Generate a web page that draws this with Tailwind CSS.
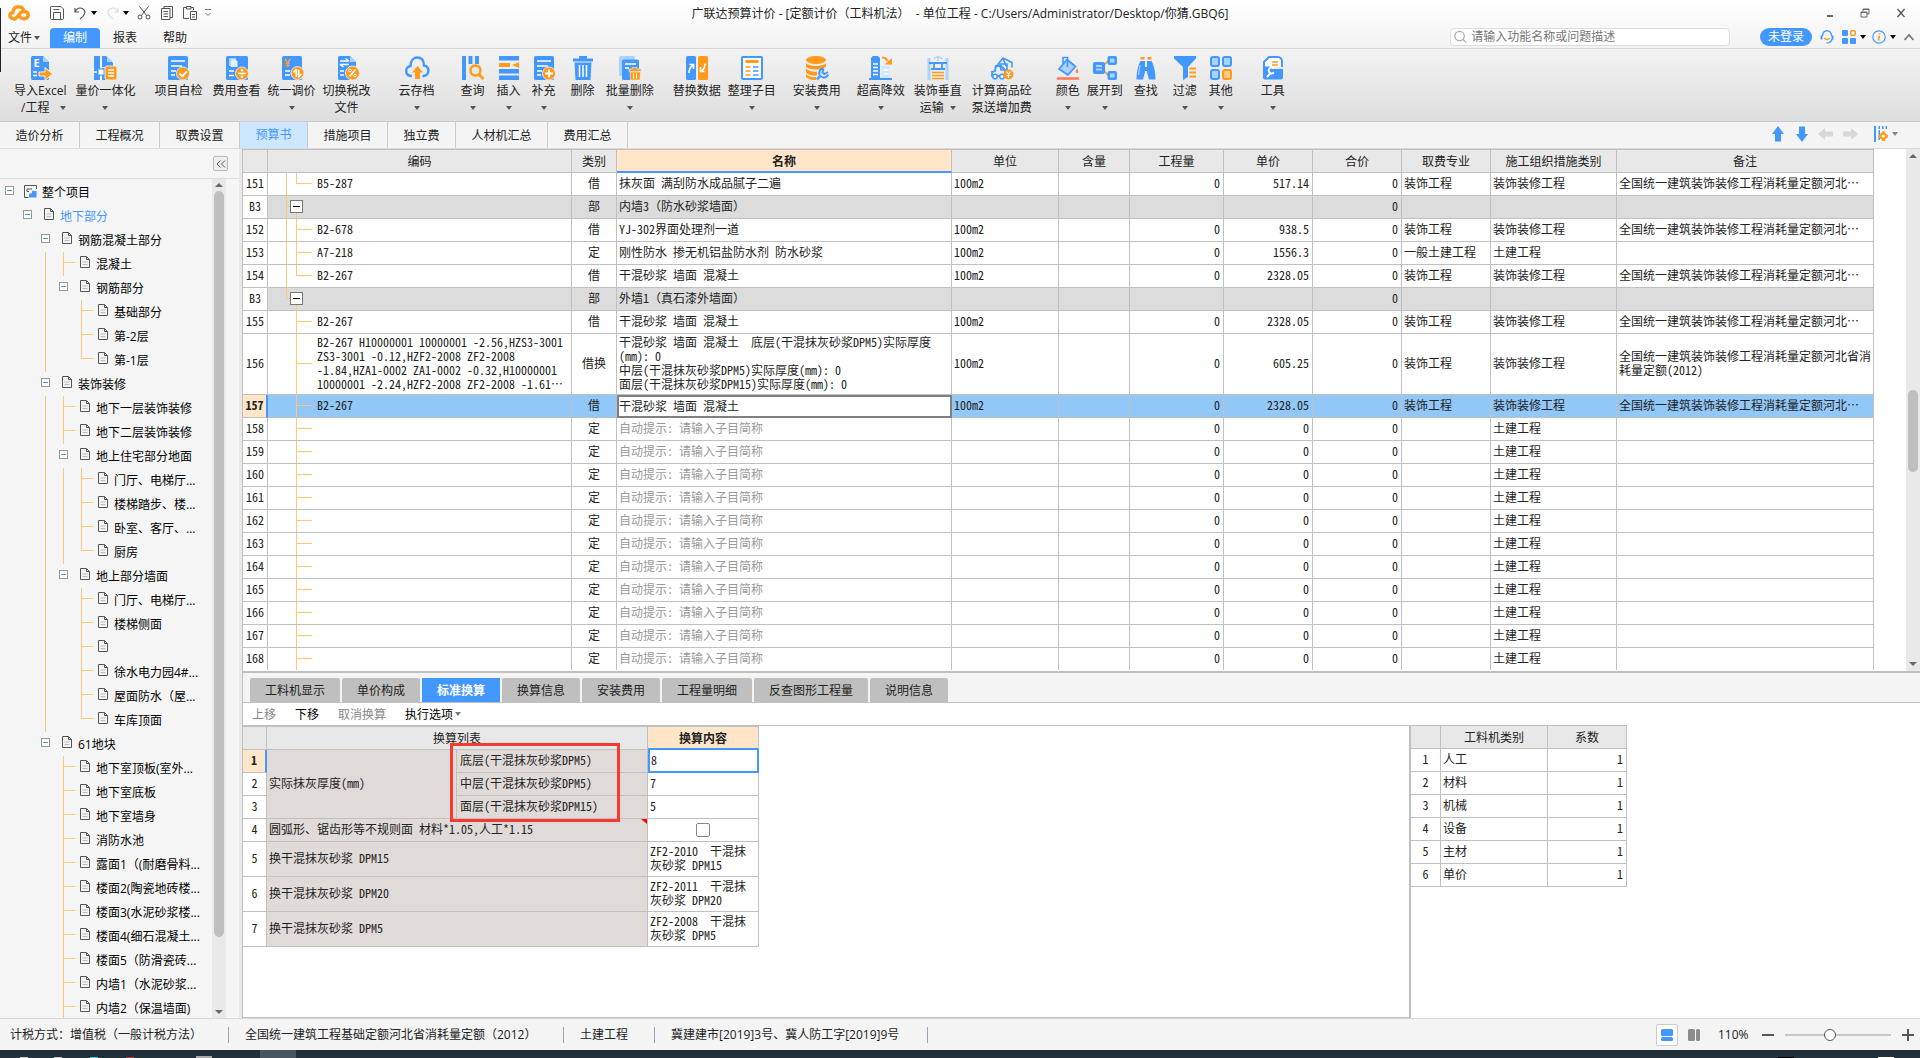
<!DOCTYPE html>
<html lang="zh-CN">
<head>
<meta charset="utf-8">
<title>广联达预算计价</title>
<script src="https://cdn.jsdelivr.net/npm/@tailwindcss/browser@4"></script>
</head>
<body class="flex h-screen flex-col overflow-hidden bg-white font-['Open_Sans','Noto_Sans_CJK_SC',sans-serif] text-xs leading-4 text-[#222]">

<header class="relative shrink-0 border-b border-[#d4d4d4] bg-linear-to-b from-white to-[#f3f3f3]">
  <span class="absolute top-2 left-0 h-16 w-px bg-[#222]"></span>
  <div class="grid h-[26px] grid-cols-[1fr_auto_1fr] items-center">
    <div class="flex items-center pl-2">
      <svg class="h-4 w-[22px]" viewBox="0 0 22 16" fill="none" stroke="#ff9a1a" stroke-width="3.4" stroke-linecap="round" stroke-linejoin="round"><path d="M4 13.5C1 12 1 8 5 7.500C5 3 8 1.700 10.500 1.700C14 1.700 15.500 4 16 6.500C20.500 6.500 21.500 11 18.500 13C16.500 14.300 13.500 14 11.500 11.500"/><path d="M6.500 14.200C8.500 13.500 9.500 12 11 9.500C12.500 7 14 6.500 16 6.500"/></svg>
      <button class="ml-5" aria-label="保存"><svg class="h-3.5 w-3.5" viewBox="0 0 14 14" fill="none" stroke="#555"><path d="M.5 1.500a1 1 0 0 1 1-1H11L13.500 3v9.500a1 1 0 0 1-1 1h-11a1 1 0 0 1-1-1zM3.500 13V6.500h7V13M3.500 3.500h6"/></svg></button>
      <button class="ml-2.5" aria-label="撤销"><svg class="h-3.5 w-3" viewBox="0 0 12 14" fill="none" stroke="#555" stroke-width="1.200"><path d="M1 2v4h4M1 6C3 2 6 1.500 8.500 2.500C12.500 5 11.500 9 6 13"/></svg></button>
      <svg class="ml-[5px] h-1 w-1.5" viewBox="0 0 6 4"><path d="M0 0h6L3 4z"/></svg>
      <button class="ml-2.5" aria-label="恢复"><svg class="h-3.5 w-3" viewBox="0 0 12 14" fill="none" stroke="#ddd" stroke-width="1.200"><path d="M11 2v4H7M11 6C9 2 6 1.500 3.500 2.500C-.5 5 .5 9 6 13"/></svg></button>
      <svg class="ml-1 h-1 w-1.5" viewBox="0 0 6 4"><path d="M0 0h6L3 4z"/></svg>
      <button class="ml-2" aria-label="剪切"><svg class="h-3.5 w-3.5" viewBox="0 0 14 14" fill="none" stroke="#555"><circle cx="3" cy="11" r="2"/><circle cx="11" cy="11" r="2"/><path d="M2.500.5L9.700 9.500M11.500.5L4.300 9.500"/></svg></button>
      <button class="ml-2.5" aria-label="复制"><svg class="h-3.5 w-3" viewBox="0 0 12 14" fill="none" stroke="#555"><path d="M3 2.500V.5h8.500v11H9M.5 2.500H9v11H.5zM2.500 5.500H7M2.500 8H7M2.500 10.500H7"/></svg></button>
      <button class="ml-2.5" aria-label="粘贴"><svg class="h-3.5 w-3.5" viewBox="0 0 14 14" fill="none" stroke="#555"><path d="M6 12.500H.5v-11h3M8 1.500h2.500V4M3.500.5H8V3H3.500zM7.500 5.500h6v8h-6zM9 8.500h3M9 11h3"/></svg></button>
      <svg class="ml-2 h-2 w-1.5" viewBox="0 0 6 8" fill="none" stroke="#777"><path d="M0 .5h6M.5 4L3 6.500L5.500 4"/></svg>
    </div>
    <h1 class="pt-px whitespace-pre">广联达预算计价 - [定额计价（工料机法）  - 单位工程 - C:/Users/Administrator/Desktop/你猜.GBQ6]</h1>
    <div class="flex items-center justify-end gap-[26px] pr-3.5 text-[#666]">
      <button aria-label="最小化"><svg class="h-2.5 w-2" viewBox="0 0 8 10"><path d="M1 7h6v2H1z" fill="#666"/></svg></button>
      <button aria-label="还原"><svg class="h-2.5 w-2.5" viewBox="0 0 10 10" fill="none" stroke="#666"><path d="M3 3V1h6v5H7M3 1.500h6M1 4h6v5H1zM1 4.500h6"/></svg></button>
      <button aria-label="关闭"><svg class="h-2.5 w-2.5" viewBox="0 0 10 10" fill="none" stroke="#555" stroke-width="1.300"><path d="M1.500 1L8.500 9M8.500 1L1.500 9"/></svg></button>
    </div>
  </div>
  <div class="flex h-[22px] items-end">
    <nav class="flex items-end">
      <button class="flex h-5 w-[50px] items-center gap-0.5 pl-2">文件<svg class="h-1 w-1.5" viewBox="0 0 6 4"><path d="M0 0h6L3 4z" fill="#555"/></svg></button>
      <button class="h-5 w-[50px] rounded-t-sm bg-[#4398ff] text-white">编制</button>
      <button class="h-5 w-[50px]">报表</button>
      <button class="h-5 w-[50px]">帮助</button>
    </nav>
    <div class="ml-auto flex items-center pr-1.5 pb-0.5">
      <label class="flex h-[18px] w-[280px] items-center gap-1 rounded-sm border border-[#ddd] bg-white pl-[3px]">
        <svg class="h-3.5 w-3.5" viewBox="0 0 14 14" fill="none" stroke="#aaa" stroke-width="1.300"><circle cx="6" cy="6" r="5"/><path d="M9.500 9.500L13 13"/></svg>
        <input type="text" class="w-full bg-transparent leading-4 outline-none placeholder:text-[#777]" placeholder="请输入功能名称或问题描述" aria-label="搜索">
      </label>
      <button class="ml-[30px] h-[18px] w-[52px] rounded-full bg-[#4398ff] text-white">未登录</button>
      <svg class="ml-2 h-3.5 w-3.5" viewBox="0 0 14 14" fill="none" stroke="#4398ff" stroke-width="1.500"><path d="M2.500 6C2.500 -1 11.500 -1 11.500 6M12 9C11.500 12 9 13 6.500 13"/><path d="M1.500 5.500v4M12.500 5.500v4" stroke-width="2"/><path d="M4.500 8C6 10 8 10 9.500 8" stroke="#ff9a1a"/></svg>
      <svg class="ml-2 h-3.5 w-3.5" viewBox="0 0 14 14" fill="#4398ff"><rect width="6" height="6" rx="1"/><rect y="8" width="6" height="6" rx="1"/><rect x="8" y="8" width="6" height="6" rx="1"/><rect x="8.700" y=".7" width="4.600" height="4.600" rx="1" fill="none" stroke="#ff9a1a" stroke-width="1.400"/></svg>
      <svg class="ml-1 h-1 w-1.5" viewBox="0 0 6 4"><path d="M0 0h6L3 4z"/></svg>
      <svg class="ml-1.5 h-3.5 w-3.5" viewBox="0 0 14 14" fill="none" stroke="#4398ff" stroke-width="1.200"><circle cx="7" cy="7" r="6.200"/><path d="M7.300 5.700L6.500 10.500M7.700 3.200l-.1 1.200" stroke="#ff9a1a" stroke-width="1.700"/></svg>
      <svg class="ml-1 h-1 w-1.5" viewBox="0 0 6 4"><path d="M0 0h6L3 4z"/></svg>
      <svg class="ml-2 h-2 w-2.5" viewBox="0 0 10 8" fill="none" stroke="#777" stroke-width="1.800"><path d="M.5 7L5 2L9.500 7"/></svg>
    </div>
  </div>
</header>

<div id="ribbon" class="flex h-[73px] shrink-0 items-start border-b border-[#ccc] bg-linear-to-b from-[#f3f3f3] to-[#dedede] pt-[7px]"></div>

<nav class="flex h-[27px] shrink-0 items-stretch border-b border-[#d9d9d9] bg-[#f4f4f4]">
  <button class="w-20 border-r border-[#ccc] pt-0.5">造价分析</button>
  <button class="w-20 border-r border-[#ccc] pt-0.5">工程概况</button>
  <button class="w-20 border-r border-[#ccc] pt-0.5">取费设置</button>
  <button class="w-[68px] border-r border-[#ccc] bg-[#cce7ff] text-[#4398ff]">预算书</button>
  <button class="w-20 border-r border-[#ccc] pt-0.5">措施项目</button>
  <button class="w-[68px] border-r border-[#ccc] pt-0.5">独立费</button>
  <button class="w-[92px] border-r border-[#ccc] pt-0.5">人材机汇总</button>
  <button class="w-20 border-r border-[#ccc] pt-0.5">费用汇总</button>
  <div class="ml-auto flex items-center pr-[22px] pb-0.5">
    <button aria-label="上移行"><svg class="h-4 w-3" viewBox="0 0 12 16"><path d="M6 0l6 8H9v7.500H3V8H0z" fill="#4398ff"/></svg></button>
    <button class="ml-3" aria-label="下移行"><svg class="h-4 w-3" viewBox="0 0 12 16"><path d="M6 16l6-8H9V.5H3V8H0z" fill="#4398ff"/></svg></button>
    <button class="ml-2.5" aria-label="后退"><svg class="h-3 w-[15px]" viewBox="0 0 15 12"><path d="M0 6l7-6v3.500h8v5H7V12z" fill="#d8d8d8"/></svg></button>
    <button class="ml-2.5" aria-label="前进"><svg class="h-3 w-[15px]" viewBox="0 0 15 12"><path d="M15 6L8 0v3.500H0v5h8V12z" fill="#d8d8d8"/></svg></button>
    <button class="ml-4 flex items-center gap-1" aria-label="列设置"><svg class="h-4 w-3.5" viewBox="0 0 14 16"><path d="M0 0h2v16H0zM4.500 0h1.500v3H4.500zM8 0h1.500v3H8zM11.500 0H13v3h-1.500zM4.500 4H6v10H4.500z" fill="#4398ff"/><circle cx="9.300" cy="10.200" r="3.600" fill="#ff9a1a"/><path d="M9.300 5.500v9.400M4.700 10.200h9.200" stroke="#ff9a1a" stroke-width="3"/><circle cx="9.300" cy="10.200" r="1.400" fill="#fff"/></svg><svg class="h-1 w-1.5" viewBox="0 0 6 4"><path d="M0 0h6L3 4z" fill="#888"/></svg></button>
  </div>
</nav>

<div class="flex min-h-0 flex-1">
  <aside class="flex w-[242px] shrink-0 border-r-[3px] border-[#e9e9e9] bg-[#f5f5f5]">
    <div class="flex min-w-0 flex-1 flex-col">
      <div class="flex h-[30px] shrink-0 items-center justify-end border-b border-[#ddd] pr-[11px]">
        <button class="flex h-[15px] w-[15px] items-center justify-center rounded-xs border border-[#bbb] bg-[#eee]" aria-label="收起"><svg class="h-2 w-2.5" viewBox="0 0 10 8" fill="none" stroke="#555"><path d="M4.500.5L1 4l3.500 3.500M9 .5L5.500 4L9 7.500"/></svg></button>
      </div>
      <div class="flex min-h-0 flex-1">
        <ul id="tree" class="w-[212px] overflow-hidden pt-px text-black"></ul>
        <div class="flex w-3.5 flex-col items-center bg-[#e9e9e9] py-1">
          <svg class="h-1 w-2" viewBox="0 0 8 4"><path d="M4 0l4 4H0z" fill="#667"/></svg>
          <div class="mt-1 h-[746px] w-2.5 rounded-full bg-[#bfbfbf]"></div>
          <svg class="mt-auto h-1 w-2" viewBox="0 0 8 4"><path d="M4 4l4-4H0z" fill="#667"/></svg>
        </div>
      </div>
    </div>
  </aside>

  <main class="flex min-w-0 flex-1 flex-col border-l border-[#c0c0c0] font-['Noto_Sans_CJK_SC',sans-serif] [font-feature-settings:'hwid']">
    <section class="flex h-[522px] shrink-0 overflow-hidden">
      <div class="h-[521px] min-w-0 flex-1 overflow-hidden pr-8">
        <table class="w-full table-fixed border-separate border-spacing-0 leading-[14px] [&_td]:pb-0.5">
          <colgroup><col class="w-[25px]"><col class="w-[304px]"><col class="w-[45px]"><col><col class="w-[107px]"><col class="w-[71px]"><col class="w-[94px]"><col class="w-[89px]"><col class="w-[89px]"><col class="w-[89px]"><col class="w-[126px]"><col class="w-[257px]"></colgroup>
          <thead><tr id="head"></tr></thead>
          <tbody id="rows"></tbody>
        </table>
      </div>
      <div class="flex w-3.5 flex-col items-center bg-[#e9e9e9] py-[5px]">
        <svg class="h-1 w-2" viewBox="0 0 8 4"><path d="M4 0l4 4H0z" fill="#667"/></svg>
        <div class="mt-[232px] h-[82px] w-2.5 rounded-full bg-[#bfbfbf]"></div>
        <svg class="mt-auto h-1 w-2" viewBox="0 0 8 4"><path d="M4 4l4-4H0z" fill="#667"/></svg>
      </div>
    </section>

    <div class="flex h-8 shrink-0 items-end gap-0.5 border-t-2 border-b border-[#c0c0c0] bg-[#f4f4f4] pl-[7px]">
      <button class="h-6 w-[90px] rounded-t-xs bg-[#bfbfbf]">工料机显示</button>
      <button class="h-6 w-[78px] rounded-t-xs bg-[#bfbfbf]">单价构成</button>
      <button class="h-6 w-[78px] bg-[#4398ff] font-bold text-white">标准换算</button>
      <button class="h-6 w-[78px] rounded-t-xs bg-[#bfbfbf]">换算信息</button>
      <button class="h-6 w-[78px] rounded-t-xs bg-[#bfbfbf]">安装费用</button>
      <button class="h-6 w-[90px] rounded-t-xs bg-[#bfbfbf]">工程量明细</button>
      <button class="h-6 w-[114px] rounded-t-xs bg-[#bfbfbf]">反查图形工程量</button>
      <button class="h-6 w-[78px] rounded-t-xs bg-[#bfbfbf]">说明信息</button>
    </div>
    <div class="flex h-[22px] shrink-0 items-center gap-[19px] pl-[9px]">
      <button class="text-[#888]">上移</button>
      <button class="text-black">下移</button>
      <button class="text-[#888]">取消换算</button>
      <button class="flex items-center gap-0.5 text-black">执行选项<svg class="h-1 w-1.5" viewBox="0 0 6 4"><path d="M0 0h6L3 4z" fill="#777"/></svg></button>
    </div>
    <div class="flex min-h-0 flex-1">
      <section class="relative flex-1 border-t border-r-2 border-b border-[#c0c0c0]">
        <table class="w-[516px] table-fixed border-separate border-spacing-0 leading-[14px] [&_td]:pb-0.5">
          <colgroup><col class="w-6"><col class="w-[190px]"><col class="w-[191px]"><col class="w-[111px]"></colgroup>
          <thead><tr>
            <th class="h-6 border border-l-0 border-[#c0c0c0] bg-[#e8e8e8]"></th>
            <th colspan="2" class="h-6 border border-l-0 border-[#c0c0c0] bg-[#e8e8e8] font-normal">换算列表</th>
            <th class="h-6 border border-b-2 border-l-0 border-[#c0c0c0] border-b-[#4398ff] bg-[#ffe6c8] font-bold">换算内容</th>
          </tr></thead>
          <tbody>
            <tr>
              <td class="h-[23px] border-r-2 border-b border-[#c0c0c0] border-r-[#4398ff] bg-[#ffe6c8] text-center font-bold">1</td>
              <td rowspan="3" class="border-r border-b border-[#c0c0c0] bg-[#e0dbd8] pl-0.5">实际抹灰厚度(mm)</td>
              <td class="border-r border-b border-[#c0c0c0] bg-[#e0dbd8] pl-[3px]">底层(干混抹灰砂浆DPM5)</td>
              <td class="h-[23px] pb-0!"><input type="text" value="8" aria-label="底层厚度" class="block h-[23px] w-full border-2 border-t-0 border-[#4398ff] bg-white pb-0.5 pl-px outline-none"></td>
            </tr>
            <tr>
              <td class="h-[23px] border-r border-b border-[#c0c0c0] text-center">2</td>
              <td class="border-r border-b border-[#c0c0c0] bg-[#e0dbd8] pl-[3px]">中层(干混抹灰砂浆DPM5)</td>
              <td class="border-r border-b border-[#c0c0c0] pl-0.5">7</td>
            </tr>
            <tr>
              <td class="h-[23px] border-r border-b border-[#c0c0c0] text-center">3</td>
              <td class="border-r border-b border-[#c0c0c0] bg-[#e0dbd8] pl-[3px]">面层(干混抹灰砂浆DPM15)</td>
              <td class="border-r border-b border-[#c0c0c0] pl-0.5">5</td>
            </tr>
            <tr>
              <td class="h-[23px] border-r border-b border-[#c0c0c0] text-center">4</td>
              <td colspan="2" class="relative border-r border-b border-[#c0c0c0] bg-[#e0dbd8] pl-0.5"><label for="irregular">圆弧形、锯齿形等不规则面 材料*1.05,人工*1.15</label><svg class="absolute top-0 right-0 h-[5px] w-1.5" viewBox="0 0 6 5"><path d="M0 0h6v5z" fill="red"/></svg></td>
              <td class="border-r border-b border-[#c0c0c0] pb-0!"><input id="irregular" type="checkbox" class="mx-auto block h-3.5 w-3.5 appearance-none rounded-xs border border-[#888] bg-white"></td>
            </tr>
            <tr>
              <td class="h-[35px] border-r border-b border-[#c0c0c0] text-center">5</td>
              <td colspan="2" class="border-r border-b border-[#c0c0c0] bg-[#e0dbd8] pl-0.5">换干混抹灰砂浆 DPM15</td>
              <td class="border-r border-b border-[#c0c0c0] pl-0.5">ZF2-2010&nbsp; 干混抹<br>灰砂浆 DPM15</td>
            </tr>
            <tr>
              <td class="h-[35px] border-r border-b border-[#c0c0c0] text-center">6</td>
              <td colspan="2" class="border-r border-b border-[#c0c0c0] bg-[#e0dbd8] pl-0.5">换干混抹灰砂浆 DPM20</td>
              <td class="border-r border-b border-[#c0c0c0] pl-0.5">ZF2-2011&nbsp; 干混抹<br>灰砂浆 DPM20</td>
            </tr>
            <tr>
              <td class="h-[35px] border-r border-b border-[#c0c0c0] text-center">7</td>
              <td colspan="2" class="border-r border-b border-[#c0c0c0] bg-[#e0dbd8] pl-0.5">换干混抹灰砂浆 DPM5</td>
              <td class="border-r border-b border-[#c0c0c0] pl-0.5">ZF2-2008&nbsp; 干混抹<br>灰砂浆 DPM5</td>
            </tr>
          </tbody>
        </table>
        <div class="pointer-events-none absolute top-[17px] left-[207px] h-[79px] w-[170px] border-[3px] border-[#f9382f]"></div>
      </section>
      <section class="w-[509px]">
        <table class="w-[216px] table-fixed border-separate border-spacing-0 leading-[14px] [&_td]:pb-0.5">
          <colgroup><col class="w-[30px]"><col class="w-[107px]"><col class="w-[79px]"></colgroup>
          <thead><tr>
            <th class="h-6 border border-l-0 border-[#c0c0c0] bg-[#e8e8e8]"></th>
            <th class="h-6 border border-l-0 border-[#c0c0c0] bg-[#e8e8e8] font-normal">工料机类别</th>
            <th class="h-6 border border-l-0 border-[#c0c0c0] bg-[#e8e8e8] font-normal">系数</th>
          </tr></thead>
          <tbody id="factors"></tbody>
        </table>
      </section>
    </div>
  </main>
</div>

<footer class="shrink-0">
  <div class="flex h-8 items-center border-t border-[#d6d6d6] bg-[#f4f4f4]">
    <span class="w-[229px] border-r border-[#9aa3b5] pl-2.5 whitespace-nowrap">计税方式：增值税（一般计税方法）</span>
    <span class="w-[335px] border-r border-[#9aa3b5] pl-4 whitespace-nowrap">全国统一建筑工程基础定额河北省消耗量定额（2012）</span>
    <span class="w-[91px] border-r border-[#9aa3b5] pl-4 whitespace-nowrap">土建工程</span>
    <span class="w-[273px] border-r border-[#9aa3b5] pl-4 whitespace-nowrap">冀建建市[2019]3号、冀人防工字[2019]9号</span>
    <div class="ml-auto flex items-center pr-1.5">
      <button class="flex h-[22px] w-[22px] items-center justify-center rounded-xs border border-[#ccc] bg-white" aria-label="上下布局"><svg class="h-3 w-3" viewBox="0 0 12 12" fill="#4398ff"><rect width="12" height="7" rx="1.500"/><rect y="8" width="12" height="4" rx="1.500"/></svg></button>
      <button class="ml-2.5" aria-label="左右布局"><svg class="h-3 w-3" viewBox="0 0 12 12" fill="#8c8c8c"><rect width="7" height="12" rx="1.500"/><rect x="8" width="4" height="12" rx="1.500"/></svg></button>
      <span class="ml-[18px] w-11">110%</span>
      <button aria-label="缩小"><svg class="h-3 w-3" viewBox="0 0 12 12"><path d="M0 5h12v2H0z" fill="#555"/></svg></button>
      <input type="range" min="10" max="250" value="110" aria-label="缩放" class="mx-[11px] h-3 w-[106px] appearance-none bg-[linear-gradient(#c8c8c8,#c8c8c8)] bg-[length:100%_2px] bg-center bg-no-repeat [&::-webkit-slider-thumb]:h-3 [&::-webkit-slider-thumb]:w-3 [&::-webkit-slider-thumb]:appearance-none [&::-webkit-slider-thumb]:rounded-full [&::-webkit-slider-thumb]:border [&::-webkit-slider-thumb]:border-[#555] [&::-webkit-slider-thumb]:bg-white">
      <button aria-label="放大"><svg class="h-3 w-3" viewBox="0 0 12 12"><path d="M0 5h12v2H0zM5 0h2v12H5z" fill="#555"/></svg></button>
    </div>
  </div>
  <div class="flex h-2 items-end bg-[#22303a]">
    <span class="ml-5 h-px w-2 bg-[#ccc]"></span><span class="ml-[26px] h-px w-2 bg-[#ccc]"></span><span class="ml-7 h-px w-2 bg-[#3cc]"></span><span class="ml-7 h-px w-2 bg-[#c33]"></span><span class="ml-[62px] h-0.5 w-4 bg-[#aaa]"></span><span class="ml-12 h-2 w-9 bg-[#4a565f]"></span>
    <span class="ml-auto h-px w-4 bg-black"></span><span class="mr-[26px] ml-[84px] h-px w-4 bg-white"></span>
  </div>
</footer>

<script>
const B = '#4398ff', O = '#ff9a1a', L = '#a9d2ff';
const doc = `<path d="M3 1.500A1.500 1.500 0 0 1 4.500 0H15l6 6v16.500a1.500 1.500 0 0 1-1.500 1.500h-15A1.500 1.500 0 0 1 3 22.500z" fill="${B}"/><path d="M15 0l6 6h-6z" fill="${L}"/>`;
const box = `<rect x="2" width="20" height="24" rx="1.500" fill="${B}"/>`;
const icons = {
  imp: `${doc}<text x="5.500" y="11" font-size="11" font-weight="700" fill="#fff" font-family="Noto Sans">E</text><path d="M5 16h4M5 19.500h4" stroke="#fff" stroke-width="1.500"/><path d="M11 16h6v-4.500l7.500 6.500l-7.500 6.500V20h-6z" fill="${O}" stroke="#efefef"/>`,
  integ: `<path d="M1 0h6v24H1zM9 0h4l7 7v4H9z" fill="${B}"/><path d="M14 0l6 6h-6z" fill="${L}"/><path d="M9 12h4v12H9z" fill="${B}"/><path d="M0 16h4M8 2v10M8 20v4" stroke="#fff" stroke-width="1.500"/><rect x="5" y="13" width="6" height="6" fill="#fff" stroke="${B}"/><rect x="12" y="10" width="12" height="14" rx="2" fill="${O}" stroke="#ececec"/><path d="M15 14h6M15 17h6M15 20h6" stroke="#fff" stroke-width="1.500"/>`,
  check: `${box}<path d="M5 5h14M5 10h11M5 15h5M5 19h4" stroke="#fff" stroke-width="1.600"/><circle cx="17" cy="17.500" r="6.500" fill="${O}" stroke="#e8e8e8"/><path d="M13.500 17.500l2.700 2.800l4.600-5" fill="none" stroke="#fff" stroke-width="1.900"/>`,
  view: `<rect x="1" width="22" height="24" rx="1.500" fill="${B}"/><path d="M4 2h7v8H4z" fill="${L}"/><path d="M6 3.500h4.500l2 2V11H6z" fill="#e5f1ff"/><path d="M4 15h5M4 19.500h5" stroke="#fff" stroke-width="1.600"/><circle cx="17" cy="17.500" r="6.500" fill="${O}" stroke="#e8e8e8"/><path d="M13 17.500h8" stroke="#fff" stroke-width="1.700"/><circle cx="17" cy="14.300" r="1.300" fill="#fff"/><circle cx="17" cy="20.700" r="1.300" fill="#fff"/>`,
  price: `${box}<text x="4" y="11" font-size="11" font-weight="700" fill="${O}" font-family="Noto Sans">¥</text><path d="M5 15h5M5 19h5" stroke="#fff" stroke-width="1.600"/><circle cx="17.500" cy="17" r="6.500" fill="${O}" stroke="#e8e8e8"/><path d="M16.300 13v8M16.300 13.300L13.500 16.500M18.700 21.500v-8M18.700 21l2.800-3" stroke="#fff" stroke-width="1.600" fill="none"/>`,
  tax: `${doc}<path d="M5 5h9M10.500 2.500L14 5M14 8.500H5M8.500 11L5 8.500" stroke="#fff" stroke-width="1.500" fill="none"/><path d="M5 15h4M5 19h4" stroke="#fff" stroke-width="1.600"/><circle cx="17.500" cy="17" r="7" fill="${O}" stroke="#e8e8e8"/><path d="M14.500 20.500l6-7" stroke="#fff" stroke-width="1.600"/><circle cx="15" cy="14.500" r="1.300" fill="none" stroke="#fff"/><circle cx="20" cy="19.500" r="1.300" fill="none" stroke="#fff"/>`,
  cloud: `<path d="M7 20C-.5 20-.5 11 5.500 10C5.500 4 9 1.500 12.500 1.500C16 1.500 19 4 19 9.500C25.500 11 24.500 20 17.500 20" fill="none" stroke="${B}" stroke-width="2.500"/><path d="M12.500 10l5.500 6.500h-3V23h-5v-6.500H7z" fill="${O}"/>`,
  query: `<path d="M1 0h4v24H1zM7.500 0h4v24h-4z" fill="${B}"/><path d="M14 0h4v24h-4z" fill="${B}"/><path d="M7 8h13v16H7z" fill="#e8e8e8"/><circle cx="14.500" cy="14.500" r="5" fill="none" stroke="${O}" stroke-width="2.400"/><path d="M18 18.500l4.500 4.500" stroke="${O}" stroke-width="2.800"/>`,
  insert: `<path d="M2 0h20v4.500H2zM2 13h20v4.500H2zM2 19.500h20V24H2z" fill="${B}"/><path d="M2 7h11v4H2zM22 6v6l-7-3z" fill="${O}"/>`,
  add: `${box}<path d="M5 5h14M5 10h11M5 15h5M5 19h4" stroke="#fff" stroke-width="1.600"/><circle cx="17" cy="17.500" r="6.500" fill="${O}" stroke="#e8e8e8"/><path d="M17 13.500v8M13 17.500h8" stroke="#fff" stroke-width="1.900"/>`,
  del: `<path d="M2 2.500h6V0h8v2.500h6V5.500H2zM3.500 6.500h17L19.500 24h-15z" fill="${B}"/><path d="M8.500 9v12M12 9v12M15.500 9v12" stroke="#fff" stroke-width="1.500"/>`,
  bdel: `<rect x="1" width="16" height="20" rx="1.500" fill="${L}"/><rect x="4" y="3.500" width="17" height="20.500" rx="1.500" fill="${B}"/><path d="M7 8h11M7 12h4" stroke="#fff" stroke-width="1.500"/><path d="M11 13h3v-1.500h5V13h4v2.500H11zM12 16h10.500l-.5 8h-9.500z" fill="${O}" stroke="#eee" stroke-width=".6"/><path d="M15.500 17.500v5M18.500 17.500v5" stroke="#fff"/>`,
  repl: `<rect x="1" width="10" height="24" rx="1.500" fill="${B}"/><rect x="13" width="10" height="24" rx="1.500" fill="${O}"/><path d="M4 17c0-4 1-6 4-8M4.500 8.500H8.500V13M20 7.500c0 4-1 6-4 8M19.500 15.500h-4V11" fill="none" stroke="#fff" stroke-width="1.600"/>`,
  sort: `<rect x="2" y="1" width="20" height="22" rx="1" fill="#fff" stroke="${B}" stroke-width="2"/><path d="M5.500 5.500h13" stroke="${O}" stroke-width="3"/><path d="M5.500 11h5M5.500 15h5M5.500 19h5" stroke="${O}" stroke-width="1.700"/><path d="M13 11h5.500M13 15h5.500M13 19h5.500" stroke="${B}" stroke-width="1.700"/>`,
  inst: `<ellipse cx="11" cy="4" rx="10" ry="4" fill="${O}"/><path d="M1 7c3 4 17 4 20 0v3.500c-3 4-17 4-20 0zM1 12.500c3 3.500 9 3.500 11 3v3.800c-4 .7-9 0-11-3zM1 18c3 3 7 3.500 10 3v3c-4 0-8-.5-10-3z" fill="${O}"/><path d="M18.500 12.500a4.500 4.500 0 1 0 4.500 6M18.500 12.500l-1 4l2 1.500l3.500-2" fill="none" stroke="${B}" stroke-width="2"/><path d="M14.500 20.500L12 23.500" stroke="${B}" stroke-width="2.600"/>`,
  high: `<path d="M2 2l2-2h5l2 2v21H2z" fill="${B}"/><path d="M4 8h5M4 11.500h5M4 15h5M4 18.500h5" stroke="#fff" stroke-width="1.600"/><path d="M13 10h8v13h-8z" fill="#cfe7ff"/><path d="M14.500 14h5M14.500 18h5" stroke="#fff" stroke-width="1.500"/><path d="M0 23h23" stroke="${B}" stroke-width="2"/><path d="M13 1.500c3 0 4.500 1 5.500 3.500" fill="none" stroke="${O}" stroke-width="2.200"/><path d="M15.500 8.500H23V2z" fill="${O}"/>`,
  vert: `<path d="M3 2v22M21 2v22" stroke="${L}" stroke-width="3"/><path d="M8 3c2-3 6-3 8 0M12 1v4" stroke="${L}" fill="none" stroke-width="1.500"/><path d="M3 7h18M5 13h14M8 7v6M16 7v6" stroke="${B}" stroke-width="1.800"/><path d="M6 16.500h12M6 19.500h12M6 22.500h12" stroke="${O}" stroke-width="1.700"/>`,
  pump: `<path d="M5 12L13 2l9 4.500v5M13 2l3 8" fill="none" stroke="${B}" stroke-width="1.600"/><path d="M2 20v-4l3-1l1-5h5l4 4v6z" fill="none" stroke="${B}" stroke-width="1.800"/><path d="M10 8h7v6h-6z" fill="none" stroke="${B}" stroke-width="1.600"/><circle cx="5" cy="20.500" r="2.300" fill="#fff" stroke="${B}" stroke-width="1.600"/><circle cx="12" cy="20.500" r="2.300" fill="#fff" stroke="${B}" stroke-width="1.600"/><circle cx="18.500" cy="18.500" r="5" fill="${O}"/><path d="M16.500 15.500l2 2.500l2-2.500M18.500 18v4M16.500 19.500h4" stroke="#fff" stroke-width="1.200" fill="none"/>`,
  color: `<path d="M11 3.500l8.500 7L12 19L3 13z" fill="${L}" stroke="${B}" stroke-width="1.800" stroke-linejoin="round"/><path d="M7 8V1.500h4.500V11" fill="none" stroke="${B}" stroke-width="1.600"/><path d="M21 12.500c2 3 1.500 4.500 0 4.500s-2-1.500 0-4.500z" fill="#ff7a59"/><path d="M2 22.500h20" stroke="#ff7a59" stroke-width="2.600" stroke-linecap="round"/>`,
  expand: `<path d="M11 9l5-5M11 15l5 5" stroke="${O}" stroke-width="1.700"/><rect y="6" width="12" height="12" rx="2" fill="${B}"/><path d="M3 10h6M3 13.500h6" stroke="${L}" stroke-width="2"/><rect x="14.500" width="9.500" height="9" rx="2" fill="${B}"/><rect x="14.500" y="15" width="9.500" height="9" rx="2" fill="${B}"/><rect x="17" y="2.500" width="4.500" height="4" fill="${L}"/><rect x="17" y="17.500" width="4.500" height="4" fill="${L}"/>`,
  find: `<path d="M6.500 5h4.500v11l-2 7.500H2.500C2.500 16 4 9 6.500 5zM17.500 5H13v11l2 7.500h6.500C21.500 16 20 9 17.500 5z" fill="${B}"/><path d="M10 11h4v4h-4z" fill="${B}"/><path d="M6.500 1h4v2.500h-4zM13.500 1h4v2.500h-4z" fill="${O}"/><path d="M6 9L4.500 19" stroke="${L}" stroke-width="1.300"/>`,
  filter: `<path d="M1 0h22v2.500L15 11v10l-5 3V11L1 2.500z" fill="${B}"/><path d="M16.500 12.500h6.500M16.500 16.500h6.500M16.500 20.500h6.500" stroke="${O}" stroke-width="1.800"/>`,
  other: `<g stroke-width="2"><rect x="2" y="1" width="8" height="9" rx="2" fill="${L}" stroke="${B}"/><rect x="14" y="1" width="8" height="9" rx="2" fill="${L}" stroke="${B}"/><rect x="2" y="14" width="8" height="9" rx="2" fill="${L}" stroke="${B}"/><rect x="14" y="14" width="8" height="9" rx="2" fill="#ffcc80" stroke="${O}"/></g>`,
  tool: `<path d="M3 11V6l5-5h9c2 0 4 2 4 4v6" fill="#fff" stroke="${B}" stroke-width="2"/><path d="M11 6h6M11 9h6" stroke="${O}" stroke-width="1.600"/><path d="M2 10.500h7l2 2.500h11v8.500a2 2 0 0 1-2 2H4a2 2 0 0 1-2-2z" fill="${B}"/><path d="M6 21l4-4.500M12.500 12a3 3 0 1 0 .5 4.500" stroke="#fff" stroke-width="1.900" fill="none"/>`
};
// icon, margin class, first line, second line, has drop-down arrow
const tools = [
  ['imp','ml-3.5','导入Excel','/工程',1],['integ','ml-[9px]','量价一体化','',1],['check','ml-[19px]','项目自检','',0],['view','ml-2.5','费用查看','',0],
  ['price','ml-[7px]','统一调价','',1],['tax','ml-[7px]','切换税改','文件',0],['cloud','ml-7','云存档','',1],['query','ml-[26px]','查询','',1],
  ['insert','ml-3','插入','',1],['add','ml-[11px]','补充','',1],['del','ml-[15px]','删除','',0],['bdel','ml-[11px]','批量删除','',1],
  ['repl','ml-[19px]','替换数据','',0],['sort','ml-[7px]','整理子目','',1],['inst','ml-[17px]','安装费用','',1],['high','ml-4','超高降效','',1],
  ['vert','ml-[9px]','装饰垂直','运输',1],['pump','ml-2.5','计算商品砼','泵送增加费',0],['color','ml-6','颜色','',1],['expand','ml-[7px]','展开到','',1],
  ['find','ml-[11px]','查找','',0],['filter','ml-[15px]','过滤','',1],['other','ml-3','其他','',1],['tool','ml-7','工具','',1]
];
const arrow = '<svg class="h-1 w-1.5" viewBox="0 0 6 4"><path d="M0 0h6L3 4z" fill="#555"/></svg>';
document.getElementById('ribbon').innerHTML = tools.map(([i, m, a, b, d]) =>
  `<button class="${m} flex shrink-0 flex-col items-center leading-[17px] whitespace-nowrap"><svg class="h-6 w-6 overflow-visible" viewBox="0 0 24 24">${icons[i]}</svg><span class="mt-0.5">${a}</span><span class="flex h-[17px] items-center ${i === 'imp' ? 'gap-[11px] self-end' : 'gap-1.5'}">${b}${d ? arrow : ''}</span></button>`).join('');

// Project tree: level, label, kind (r root, b branch, l leaf, e last leaf), levels whose guide passes through
const tree = [
  [0,'整个项目','r'],[1,'地下部分','b'],[2,'钢筋混凝土部分','b'],[3,'混凝土','l',[2]],[3,'钢筋部分','b',[2]],[4,'基础部分','l',[2]],[4,'第-2层','l',[2]],[4,'第-1层','e',[2]],
  [2,'装饰装修','b'],[3,'地下一层装饰装修','l',[2]],[3,'地下二层装饰装修','l',[2]],[3,'地上住宅部分地面','b',[2]],[4,'门厅、电梯厅...','l',[2,3]],[4,'楼梯踏步、楼...','l',[2,3]],[4,'卧室、客厅、...','l',[2,3]],[4,'厨房','e',[2,3]],
  [3,'地上部分墙面','b',[2]],[4,'门厅、电梯厅...','l',[2]],[4,'楼梯侧面','l',[2]],[4,'','l',[2]],[4,'徐水电力园4#...','l',[2]],[4,'屋面防水（屋...','l',[2]],[4,'车库顶面','e',[2]],
  [2,'61地块','b'],[3,'地下室顶板(室外...','l'],[3,'地下室底板','l'],[3,'地下室墙身','l'],[3,'消防水池','l'],[3,'露面1（(耐磨骨料...','l'],[3,'楼面2(陶瓷地砖楼...','l'],[3,'楼面3(水泥砂浆楼...','l'],[3,'楼面4(细石混凝土...','l'],[3,'楼面5（防滑瓷砖...','l'],[3,'内墙1（水泥砂浆...','l'],[3,'内墙2（保温墙面)','l']
];
const page = '<svg class="mr-1.5 mb-1.5 h-3 w-2.5 shrink-0" viewBox="0 0 10 12" fill="none" stroke="#555"><path d="M.5.5h6L9.500 3.500v8h-9zM6.500.5v3h3" /><path d="M2.500 6h5M2.500 8.500h5" stroke="#bbb"/></svg>';
const root = '<svg class="mr-[5px] mb-1 h-[13px] w-[13px] shrink-0" viewBox="0 0 13 13" fill="none" stroke="#555"><path d="M12.500 4V.5H.5v12h4M8 4H3v2.500h2"/><path d="M5 12.500V9l3-1V6h4.500v6.500z" fill="#4398ff" stroke="none"/></svg>';
document.getElementById('tree').innerHTML = tree.map(([lv, label, kind, g = []]) => {
  let s = '';
  for (let i = 0; i < lv; i++) s += g.includes(i) ? '<span class="flex w-[18px] shrink-0"><i class="ml-2 w-px bg-[#ffc67d]"></i></span>' : '<span class="w-[18px] shrink-0"></span>';
  if (kind === 'l' || kind === 'e')
    s += `<span class="flex w-[25px] shrink-0 flex-col pl-2"><i class="h-[11px] w-3 border-b border-l border-[#ffc67d]"></i>${kind === 'l' ? '<i class="flex-1 border-l border-[#ffc67d]"></i>' : ''}</span>`;
  else
    s += `<span class="flex ${kind === 'r' ? 'w-[23px]' : 'w-[25px]'} shrink-0 items-center pb-1 pl-1"><i class="flex h-[9px] w-[9px] items-center border border-[#999] bg-white px-px"><b class="h-px w-full bg-[#3aa0c8]"></b></i></span>`;
  return `<li class="flex h-6 pl-px"><span class="flex shrink-0 self-stretch">${s}</span><span class="flex items-center pt-0.5 whitespace-nowrap ${lv === 1 ? 'text-[#4398ff]' : ''}">${kind === 'r' ? root : page}${label}</span></li>`;
}).join('');

// Quota grid
const heads = ['','编码','类别','名称','单位','含量','工程量','单价','合价','取费专业','施工组织措施类别','备注'];
document.getElementById('head').innerHTML = heads.map((h, i) => i === 3
  ? `<th class="h-6 border-t border-r border-b-2 border-[#c0c0c0] border-b-[#4398ff] bg-[#ffe6c8] font-bold">${h}</th>`
  : `<th class="h-6 border-t border-r border-b border-[#c0c0c0] bg-[#e8e8e8] font-normal">${h}</th>`).join('');
const note = '全国统一建筑装饰装修工程消耗量定额河北…';
const dec = ['装饰工程','装饰装修工程'];
const rows = [
  ['151','B5-287','借','抹灰面 满刮防水成品腻子二遍','517.14',...dec,note,'pe'],
  ['B3','','部','内墙3<span class="[font-feature-settings:normal]">（防水砂浆墙面）</span>'],
  ['152','B2-678','借','YJ-302界面处理剂一道','938.5',...dec,note,'pl'],
  ['153','A7-218','定','刚性防水 掺无机铝盐防水剂 防水砂浆','1556.3','一般土建工程','土建工程','','pl'],
  ['154','B2-267','借','干混砂浆 墙面 混凝土','2328.05',...dec,note,'pe'],
  ['B3','','部','外墙1<span class="[font-feature-settings:normal]">（真石漆外墙面）</span>','last'],
  ['155','B2-267','借','干混砂浆 墙面 混凝土','2328.05',...dec,note,'l'],
  ['156','B2-267 H10000001 10000001 -2.56,HZS3-3001<br>ZS3-3001 -0.12,HZF2-2008 ZF2-2008<br>-1.84,HZA1-0002 ZA1-0002 -0.32,H10000001<br>10000001 -2.24,HZF2-2008 ZF2-2008 -1.61…','借换','干混砂浆 墙面 混凝土&nbsp; 底层(干混抹灰砂浆DPM5)实际厚度<br>(mm): 0<br>中层(干混抹灰砂浆DPM5)实际厚度(mm): 0<br>面层(干混抹灰砂浆DPM15)实际厚度(mm): 0','605.25',...dec,'全国统一建筑装饰装修工程消耗量定额河北省消<br>耗量定额(2012)','l'],
  ['157','B2-267','借','干混砂浆 墙面 混凝土','2328.05',...dec,note,'l']
];
for (let n = 158; n <= 168; n++) rows.push([String(n),'','定','<span class="text-[#999]">自动提示: 请输入子目简称</span>','0','','土建工程','','l']);
const td = 'border-r border-b border-[#c0c0c0] whitespace-nowrap ';
const full = '<span class="flex w-2.5 shrink-0"><i class="w-px bg-[#ffc67d]"></i></span>';
const gap = '<span class="w-2.5 shrink-0"></span>';
document.getElementById('rows').innerHTML = rows.map(r => {
  const [n, code, cat, name] = r, sel = n === '157', dept = n === 'B3';
  const h = n === '156' ? 'h-[60px]' : 'h-[22px]';
  const bg = dept ? 'bg-[#dcdcdc]' : sel ? 'bg-[#91c8f8]' : 'bg-white';
  let g;
  if (dept) {
    const last = r[4] === 'last';
    g = `<span class="flex w-1 shrink-0 flex-col"><i class="h-[11px] w-full border-b border-l border-[#ffc67d]"></i>${last ? '' : '<i class="flex-1 border-l border-[#ffc67d]"></i>'}</span><span class="flex w-[13px] flex-col items-center pt-1"><i class="flex h-[13px] w-[13px] shrink-0 items-center border border-[#777] bg-white px-0.5"><b class="h-px w-full bg-black"></b></i><i class="w-px flex-1 bg-[#ffc67d]"></i></span>`;
  } else {
    const k = r[8];
    g = (k[0] === 'p' ? full : gap) + `<span class="flex w-4 shrink-0 flex-col"><i class="${n === '156' ? 'h-[30px]' : 'h-[11px]'} border-b border-l border-[#ffc67d]"></i>${k.endsWith('e') ? '' : '<i class="flex-1 border-l border-[#ffc67d]"></i>'}</span>`;
  }
  const num = sel ? '<td class="border-r-2 border-b border-[#c0c0c0] border-r-[#4398ff] bg-[#ffe6c8] text-center font-bold">157</td>' : `<td class="${td}bg-white text-center">${n}</td>`;
  const v = dept ? ['','','','','0','','',''] : [n < 158 ? '100m2' : '','','0',r[4],'0',r[5],r[6],r[7]];
  return `<tr class="${bg}">${num}`
    + `<td class="${td}pb-0!"><div class="${h} flex pl-[18px]">${g}<span class="ml-[5px] self-center pb-0.5">${code}</span></div></td>`
    + `<td class="${td}text-center">${cat}</td>`
    + (sel ? `<td class="border-2 border-[#808080] bg-white whitespace-nowrap">${name}</td>` : `<td class="${td}pl-0.5">${name}</td>`)
    + v.map((x, i) => `<td class="${td}${i > 0 && i < 5 ? 'pr-[3px] text-right' : 'pl-0.5'}">${x}</td>`).join('') + '</tr>';
}).join('');

document.getElementById('factors').innerHTML = ['人工','材料','机械','设备','主材','单价'].map((x, i) =>
  `<tr><td class="h-[23px] border-r border-b border-[#c0c0c0] text-center">${i + 1}</td><td class="border-r border-b border-[#c0c0c0] pl-0.5">${x}</td><td class="border-r border-b border-[#c0c0c0] pr-[3px] text-right">1</td></tr>`).join('');
</script>
</body>
</html>
